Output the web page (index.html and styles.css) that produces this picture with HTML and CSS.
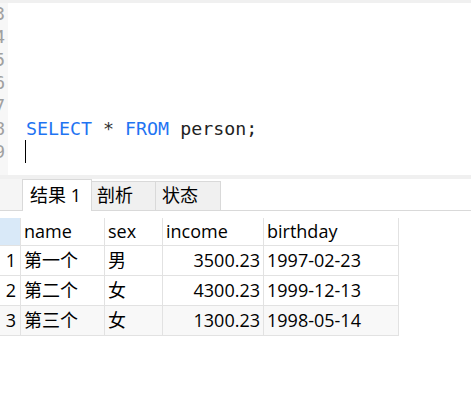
FILE: index.html
```html
<!DOCTYPE html>
<html>
<head>
<meta charset="utf-8">
<link rel="stylesheet" href="styles.css">
</head>
<body>
<div class="top-strip"></div>
<div class="editor">
  <div class="gutter">
    <div class="ln">2</div>
    <div class="ln">3</div>
    <div class="ln">4</div>
    <div class="ln">5</div>
    <div class="ln">6</div>
    <div class="ln">7</div>
    <div class="ln">8</div>
    <div class="ln">9</div>
  </div>
  <div class="code">
    <div class="line"></div>
    <div class="line"></div>
    <div class="line"></div>
    <div class="line"></div>
    <div class="line"></div>
    <div class="line"><span class="kw">SELECT</span> <span class="op">*</span> <span class="kw">FROM</span> <span class="id">person;</span></div>
    <div class="line"><span class="caret"></span></div>
  </div>
</div>
<div class="mid-strip"></div>
<div class="tabbar">
  <div class="tab-lead"></div>
  <div class="tab active">结果 1</div>
  <div class="tab t2">剖析</div>
  <div class="tab t3">状态</div>
  <div class="tab-fill"></div>
</div>
<div class="grid">
  <div class="c hd rn"></div>
  <div class="c hd">name</div>
  <div class="c hd">sex</div>
  <div class="c hd">income</div>
  <div class="c hd">birthday</div>

  <div class="c rn">1</div>
  <div class="c">第一个</div>
  <div class="c">男</div>
  <div class="c num">3500.23</div>
  <div class="c">1997-02-23</div>

  <div class="c rn">2</div>
  <div class="c">第二个</div>
  <div class="c">女</div>
  <div class="c num">4300.23</div>
  <div class="c">1999-12-13</div>

  <div class="c rn alt">3</div>
  <div class="c alt">第三个</div>
  <div class="c alt">女</div>
  <div class="c num alt">1300.23</div>
  <div class="c alt">1998-05-14</div>
</div>
</body>
</html>
```
FILE: styles.css
```css
html, body {
  margin: 0;
  padding: 0;
  background: #ffffff;
}
body {
  width: 471px;
  height: 414px;
  overflow: hidden;
}
.top-strip {
  height: 3px;
  background: #f0f0f0;
}
.editor {
  height: 172px;
  display: flex;
  overflow: hidden;
  background: #ffffff;
}
.gutter {
  width: 8px;
  background: #f7f7f7;
  overflow: hidden;
  margin-top: -24px;
  flex: none;
}
.ln {
  height: 23px;
  line-height: 23px;
  font-family: "DejaVu Sans Mono", monospace;
  font-size: 18px;
  color: #a0a0a0;
  text-align: right;
  padding-right: 3px;
  white-space: nowrap;
  direction: rtl;
}
.code {
  flex: 1;
  padding-left: 18px;
  margin-top: -1px;
}
.line {
  height: 23px;
  line-height: 23px;
  font-family: "DejaVu Sans Mono", monospace;
  font-size: 18.3px;
  color: #222222;
  white-space: pre;
}
.kw { color: #1f74f2; }
.op { color: #333333; }
.id { color: #222222; }
.caret {
  display: inline-block;
  width: 1px;
  height: 23px;
  background: #000000;
  vertical-align: top;
  margin-left: -1px;
}
.mid-strip {
  height: 4px;
  background: #f0f0f0;
}
.tabbar {
  display: flex;
  align-items: flex-end;
  height: 32px;
  box-sizing: border-box;
  border-bottom: 1px solid #d9d9d9;
}
.tab-lead {
  width: 22px;
  align-self: stretch;
  background: #f5f5f5;
}
.tab-fill {
  flex: 1;
}
.tab {
  box-sizing: border-box;
  height: 29px;
  line-height: 27px;
  border: 1px solid #d9d9d9;
  border-bottom: none;
  background: #f0f0f0;
  font-family: "Open Sans", "Noto Sans CJK SC", sans-serif;
  font-size: 18px;
  color: #000000;
  white-space: nowrap;
}
.tab.active {
  width: 70px;
  height: 32px;
  line-height: 30px;
  background: #ffffff;
  padding-left: 7px;
  margin-bottom: -1px;
  position: relative;
}
.tab.t2 {
  width: 64px;
  padding-left: 5px;
  border-left: none;
}
.tab.t3 {
  width: 65px;
  padding-left: 6px;
  border-left: none;
}
.grid {
  margin-top: 7px;
  display: grid;
  grid-template-columns: 21px 84px 58px 101px 135px;
  grid-template-rows: 28px 30px 30px 30px;
  width: 399px;
}
.c {
  box-sizing: border-box;
  border-right: 1px solid #e2e2e2;
  border-bottom: 1px solid #e2e2e2;
  font-family: "Open Sans", "Noto Sans CJK SC", sans-serif;
  font-size: 18px;
  line-height: 29px;
  color: #000000;
  padding-left: 3px;
  white-space: nowrap;
  overflow: hidden;
}
.c.hd {
  line-height: 27px;
  padding-left: 3px;
}
.c.hd.rn {
  background: #d9e9f8;
}
.c.rn {
  text-align: right;
  padding-left: 0;
  padding-right: 4px;
}
.c.num {
  text-align: right;
  padding-right: 3px;
}
.c.alt {
  background: #f8f8f8;
}
```
